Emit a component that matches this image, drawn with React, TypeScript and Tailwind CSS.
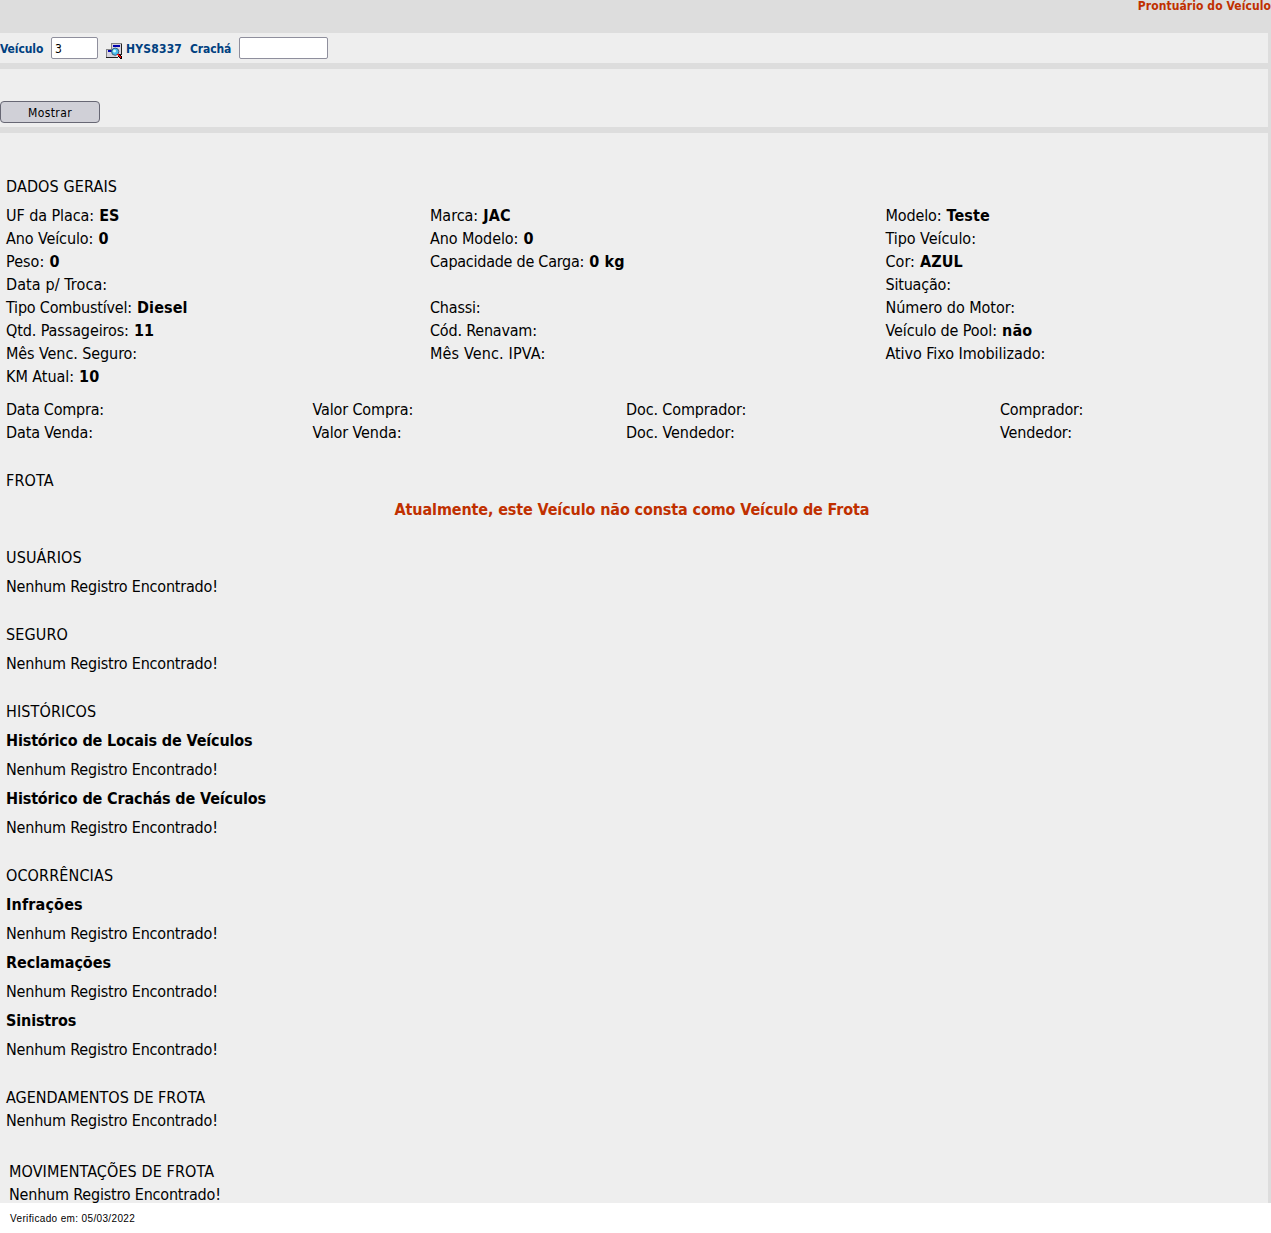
import type { ReactNode } from 'react';

function Row({ label, value, tracking = 'tracking-[-0.13px]' }: { label?: string; value?: string; tracking?: string }) {
  return (
    <div className={`h-[23px] whitespace-nowrap ${tracking}`}>
      {label}
      {value && <b className="font-bold tracking-[0.1px]"> {value}</b>}
    </div>
  );
}

function Heading({ children, tracking = 'tracking-[0.12px]' }: { children: ReactNode; tracking?: string }) {
  return <h2 className={`h-[23px] whitespace-nowrap ${tracking}`}>{children}</h2>;
}

function SubHeading({ children, tracking = 'tracking-[-0.14px]' }: { children: ReactNode; tracking?: string }) {
  return <h3 className={`h-[23px] font-bold whitespace-nowrap ${tracking}`}>{children}</h3>;
}

function Empty() {
  return <p className="h-[23px] tracking-[-0.2px] whitespace-nowrap">Nenhum Registro Encontrado!</p>;
}

function Section({ title, children }: { title: string; children: ReactNode }) {
  return (
    <section className="flex flex-col gap-1.5">
      <Heading>{title}</Heading>
      {children}
    </section>
  );
}

function LookupIcon() {
  return (
    <svg className="mt-1.5 h-4 w-4 shrink-0" viewBox="0 0 16 16" shapeRendering="crispEdges">
      <path fill="#848484" d="M5 0h11v1H5zM5 1h1v6H5z" />
      <path fill="#212121" d="M15 1h1v11h-1zM12 11h3v1h-3z" />
      <path fill="#d6d3de" d="M6 1h9v10H6z" />
      <path fill="#0000ad" d="M7 2h7v2H7z" />
      <path fill="#848484" d="M0 6h9v1H0zM0 7h1v8H0z" />
      <path fill="#d6d3de" d="M1 7h9v7H1z" />
      <path fill="#0000ad" d="M2 7h4v2H2z" />
      <path fill="#212121" d="M0 14h12v1H0z" />
      <g shapeRendering="auto">
        <circle cx="9.2" cy="8.7" r="3.6" fill="#4abdef" stroke="#31526b" strokeWidth="0.9" />
        <circle cx="8.5" cy="8" r="1.5" fill="#ceffff" />
      </g>
      <path fill="#000" d="M13 11h1v1h1v1h1v3h-2v-1h-1v-1h-1v-1h1z" />
      <path fill="#f70000" d="M11 11h2v1h1v1h1v2h-1v-1h-1v-1h-1v-1h-1z" />
    </svg>
  );
}

export default function App() {
  return (
    <div className="min-h-[1233px] w-full bg-white font-['DejaVu_Sans_Condensed','DejaVu_Sans',sans-serif] text-black [font-stretch:condensed]">
      <div className="bg-[#dddddd] pr-[3px]">
        <header className="-mr-[3px] h-[33px] text-right text-[12px] leading-[13px] font-bold tracking-[0.08px] text-[#c03000]">
          <h1>Prontuário do Veículo</h1>
        </header>

        <div className="flex h-[30px] items-start bg-[#eeeeee] pt-1 text-[12px] leading-[24px] font-bold text-[#004080]">
          <label className="w-[51px] tracking-[-0.1px]">Veículo</label>
          <input
            defaultValue="3"
            className="h-[22px] w-[47px] rounded-[2px] border border-[#8f8f9d] bg-white px-[3px] pt-[2px] leading-[18px] font-normal text-black"
          />
          <span className="ml-2 flex">
            <LookupIcon />
          </span>
          <span className="ml-1 w-16 tracking-[0.2px]">HYS8337</span>
          <label className="w-[49px] tracking-[-0.1px]">Crachá</label>
          <input className="h-[22px] w-[89px] rounded-[2px] border border-[#8f8f9d] bg-white px-[3px] font-normal text-black" />
        </div>

        <div className="mt-1.5 h-[58px] bg-[#eeeeee] pt-8">
          <button className="block h-[22px] w-[100px] rounded-[4px] border border-[#676774] bg-[#d0d0d7] pt-px text-[12px] leading-[21px] tracking-[0.4px]">
            Mostrar
          </button>
        </div>

        <main className="mt-1.5 flex h-[1070px] flex-col gap-[25px] bg-[#eeeeee] pt-[42px] pl-1.5 text-[16px] leading-[23px]">
          <Section title="DADOS GERAIS">
            <div className="flex">
              <div className="w-[424px]">
                <Row label="UF da Placa:" value="ES" tracking="tracking-[-0.08px]" />
                <Row label="Ano Veículo:" value="0" tracking="tracking-[-0.1px]" />
                <Row label="Peso:" value="0" tracking="tracking-[0.03px]" />
                <Row label="Data p/ Troca:" tracking="tracking-[0.1px]" />
                <Row label="Tipo Combustível:" value="Diesel" tracking="tracking-[-0.2px]" />
                <Row label="Qtd. Passageiros:" value="11" tracking="tracking-[-0.1px]" />
                <Row label="Mês Venc. Seguro:" tracking="tracking-[-0.08px]" />
                <Row label="KM Atual:" value="10" tracking="tracking-[-0.05px]" />
              </div>
              <div className="w-[455.5px]">
                <Row label="Marca:" value="JAC" tracking="tracking-[-0.05px]" />
                <Row label="Ano Modelo:" value="0" tracking="tracking-[-0.08px]" />
                <Row label="Capacidade de Carga:" value="0 kg" tracking="tracking-[-0.25px]" />
                <Row />
                <Row label="Chassi:" tracking="tracking-[-0.2px]" />
                <Row label="Cód. Renavam:" tracking="tracking-[-0.2px]" />
                <Row label="Mês Venc. IPVA:" tracking="tracking-[0.15px]" />
              </div>
              <div>
                <Row label="Modelo:" value="Teste" />
                <Row label="Tipo Veículo:" tracking="tracking-[-0.04px]" />
                <Row label="Cor:" value="AZUL" tracking="tracking-[0.02px]" />
                <Row label="Situação:" tracking="tracking-[-0.2px]" />
                <Row label="Número do Motor:" tracking="tracking-[-0.05px]" />
                <Row label="Veículo de Pool:" value="não" tracking="tracking-[-0.1px]" />
                <Row label="Ativo Fixo Imobilizado:" tracking="tracking-[-0.05px]" />
              </div>
            </div>
            <div className="mt-1 flex">
              <div className="w-[306.5px]">
                <Row label="Data Compra:" tracking="tracking-[-0.22px]" />
                <Row label="Data Venda:" />
              </div>
              <div className="w-[313.5px]">
                <Row label="Valor Compra:" />
                <Row label="Valor Venda:" tracking="tracking-[-0.1px]" />
              </div>
              <div className="w-[374px]">
                <Row label="Doc. Comprador:" />
                <Row label="Doc. Vendedor:" tracking="tracking-[-0.08px]" />
              </div>
              <div>
                <Row label="Comprador:" tracking="tracking-[-0.2px]" />
                <Row label="Vendedor:" tracking="tracking-[-0.1px]" />
              </div>
            </div>
          </Section>

          <Section title="FROTA">
            <p className="h-[23px] pr-[10px] text-center font-bold tracking-[-0.12px] text-[#c03000]">
              Atualmente, este Veículo não consta como Veículo de Frota
            </p>
          </Section>

          <Section title="USUÁRIOS">
            <Empty />
          </Section>

          <Section title="SEGURO">
            <Empty />
          </Section>

          <Section title="HISTÓRICOS">
            <SubHeading>Histórico de Locais de Veículos</SubHeading>
            <Empty />
            <SubHeading>Histórico de Crachás de Veículos</SubHeading>
            <Empty />
          </Section>

          <Section title="OCORRÊNCIAS">
            <SubHeading tracking="tracking-[0.15px]">Infrações</SubHeading>
            <Empty />
            <SubHeading tracking="tracking-[-0.05px]">Reclamações</SubHeading>
            <Empty />
            <SubHeading>Sinistros</SubHeading>
            <Empty />
          </Section>

          <section>
            <Heading tracking="tracking-[0px]">AGENDAMENTOS DE FROTA</Heading>
            <Empty />
          </section>

          <section className="mt-[3px] pl-[3px]">
            <Heading tracking="tracking-[0.1px]">MOVIMENTAÇÕES DE FROTA</Heading>
            <Empty />
          </section>
        </main>
      </div>

      <footer className="pt-[9px] pl-2.5 font-['Liberation_Sans',Arial,sans-serif] text-[10px] leading-[13px] tracking-[0.36px]">
        Verificado em: 05/03/2022
      </footer>
    </div>
  );
}
